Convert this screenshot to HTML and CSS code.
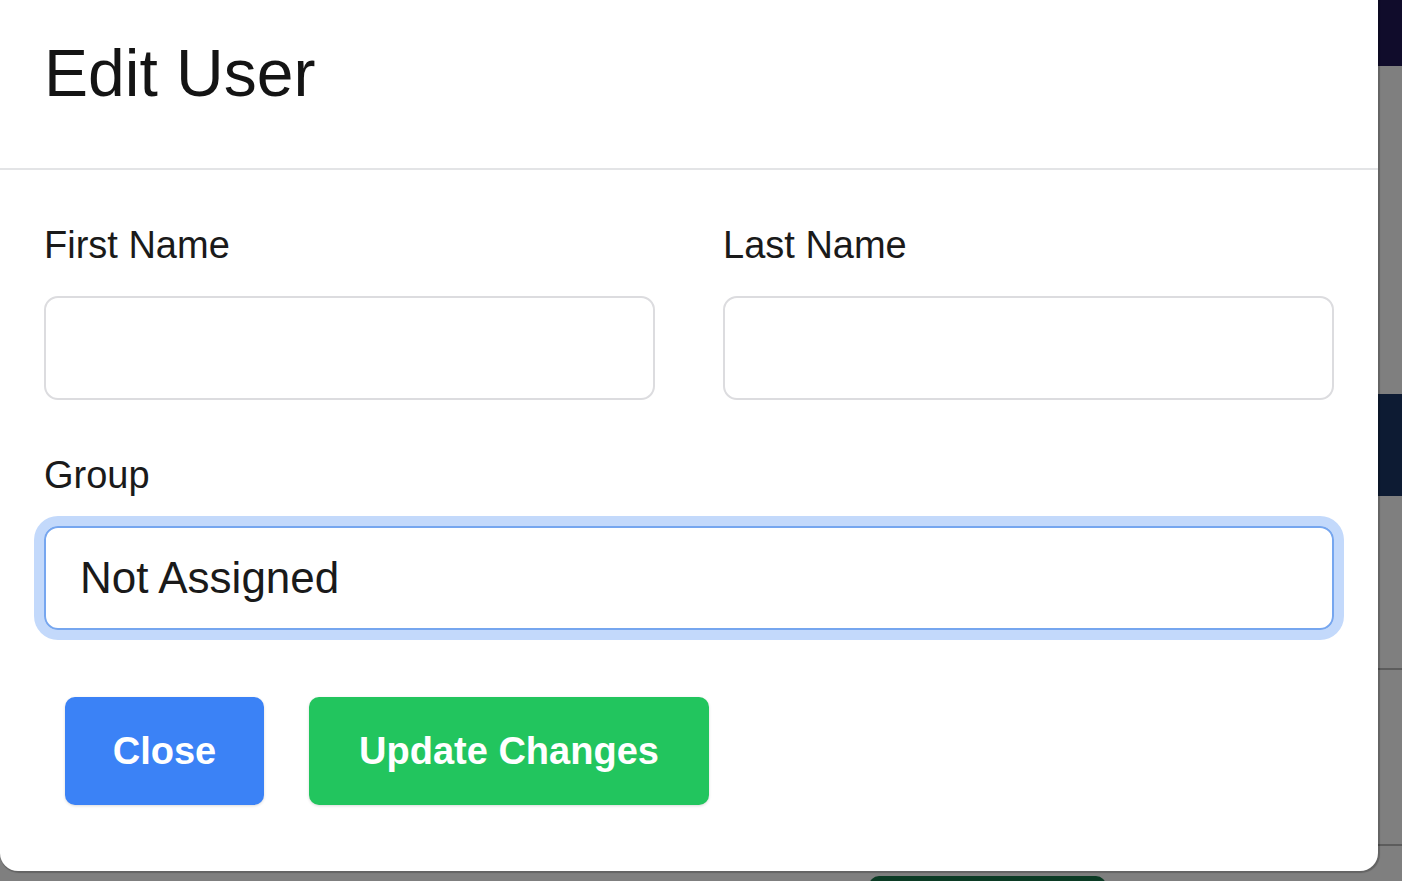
FILE: index.html
```html
<!DOCTYPE html>
<html lang="en">
<head>
<meta charset="utf-8">
<title>Edit User</title>
<link rel="stylesheet" href="styles.css">
</head>
<body>
<div class="page">
  <div class="page-nav"></div>
  <div class="page-gap1"></div>
  <div class="page-band"></div>
  <div class="page-gap2"></div>
  <div class="page-row"></div>
  <div class="page-row page-row-last"></div>
  <div class="page-foot"><span class="page-pill"></span></div>
</div>

<div class="modal">
  <div class="modal-header">
    <h2 class="modal-title">Edit User</h2>
  </div>
  <div class="modal-body">
    <div class="form-grid">
      <div class="field">
        <label class="field-label">First Name</label>
        <input class="field-input" type="text">
      </div>
      <div class="field">
        <label class="field-label">Last Name</label>
        <input class="field-input" type="text">
      </div>
    </div>
    <div class="field field-group">
      <label class="field-label field-label-group">Group</label>
      <div class="select-box">Not Assigned</div>
    </div>
    <div class="actions">
      <button class="btn btn-close">Close</button>
      <button class="btn btn-update">Update Changes</button>
    </div>
  </div>
</div>
</body>
</html>
```

FILE: styles.css
```css
* { box-sizing: border-box; }
html, body { margin: 0; padding: 0; }
body {
  background: #7f7f7f;
  font-family: "Liberation Sans", Arial, Helvetica, sans-serif;
  height: 881px;
  overflow: hidden;
  position: relative;
}

/* underlying page, dimmed */
.page { display: flex; flex-direction: column; width: 100%; }
.page-nav { height: 66px; background: #100c2b; }
.page-gap1 { height: 328px; }
.page-band { height: 102px; background: #0d1b33; }
.page-gap2 { height: 172px; }
.page-row { height: 176px; border-top: 2px solid #5c5c5c; }
.page-row-last { height: 32px; }
.page-foot { display: flex; padding-left: 869px; }
.page-pill {
  display: block;
  width: 237px;
  height: 20px;
  background: #0b3b24;
  border-radius: 10px 10px 0 0;
}

/* modal */
.modal {
  position: absolute;
  left: 0;
  top: -20px;
  width: 1378px;
  height: 891px;
  background: #fff;
  border-radius: 18px;
  box-shadow: 1px 1px 1px 1px rgba(0, 0, 0, 0.22);
}
.modal-header {
  padding: 54px 44px 0;
  height: 190px;
  border-bottom: 2px solid #e3e4e6;
}
.modal-title {
  margin: 0;
  font-size: 66px;
  font-weight: 400;
  line-height: 1.2;
  color: #141414;
}
.modal-body { padding: 53px 44px 0; }
.form-grid {
  display: grid;
  grid-template-columns: 1fr 1fr;
  column-gap: 68px;
}
.field { display: flex; flex-direction: column; }
.field-label {
  font-size: 38px;
  line-height: 1.2;
  color: #1a1a1a;
  margin-bottom: 27px;
}
.field-label-group { margin-bottom: 28px; }
.field-input {
  height: 104px;
  border: 2px solid #dcdcdf;
  border-radius: 14px;
  background: #fff;
  font-size: 38px;
  font-family: inherit;
  outline: none;
}
.field-group { margin-top: 53px; }
.select-box {
  height: 104px;
  border: 2px solid #76a6ef;
  border-radius: 14px;
  box-shadow: 0 0 0 10px #c3d9fb;
  display: flex;
  align-items: center;
  padding-left: 34px;
  font-size: 44px;
  color: #1a1a1a;
}
.actions {
  display: flex;
  gap: 45px;
  margin-top: 67px;
  padding-left: 21px;
}
.btn {
  height: 108px;
  border: none;
  border-radius: 10px;
  font-family: inherit;
  font-weight: 700;
  font-size: 38px;
  color: #fff;
  padding: 0 47px;
  box-shadow: 0 1px 3px rgba(0, 0, 0, 0.15);
}
.btn-close { background: #3b82f6; width: 199px; }
.btn-update { background: #22c55e; width: 400px; }
```
